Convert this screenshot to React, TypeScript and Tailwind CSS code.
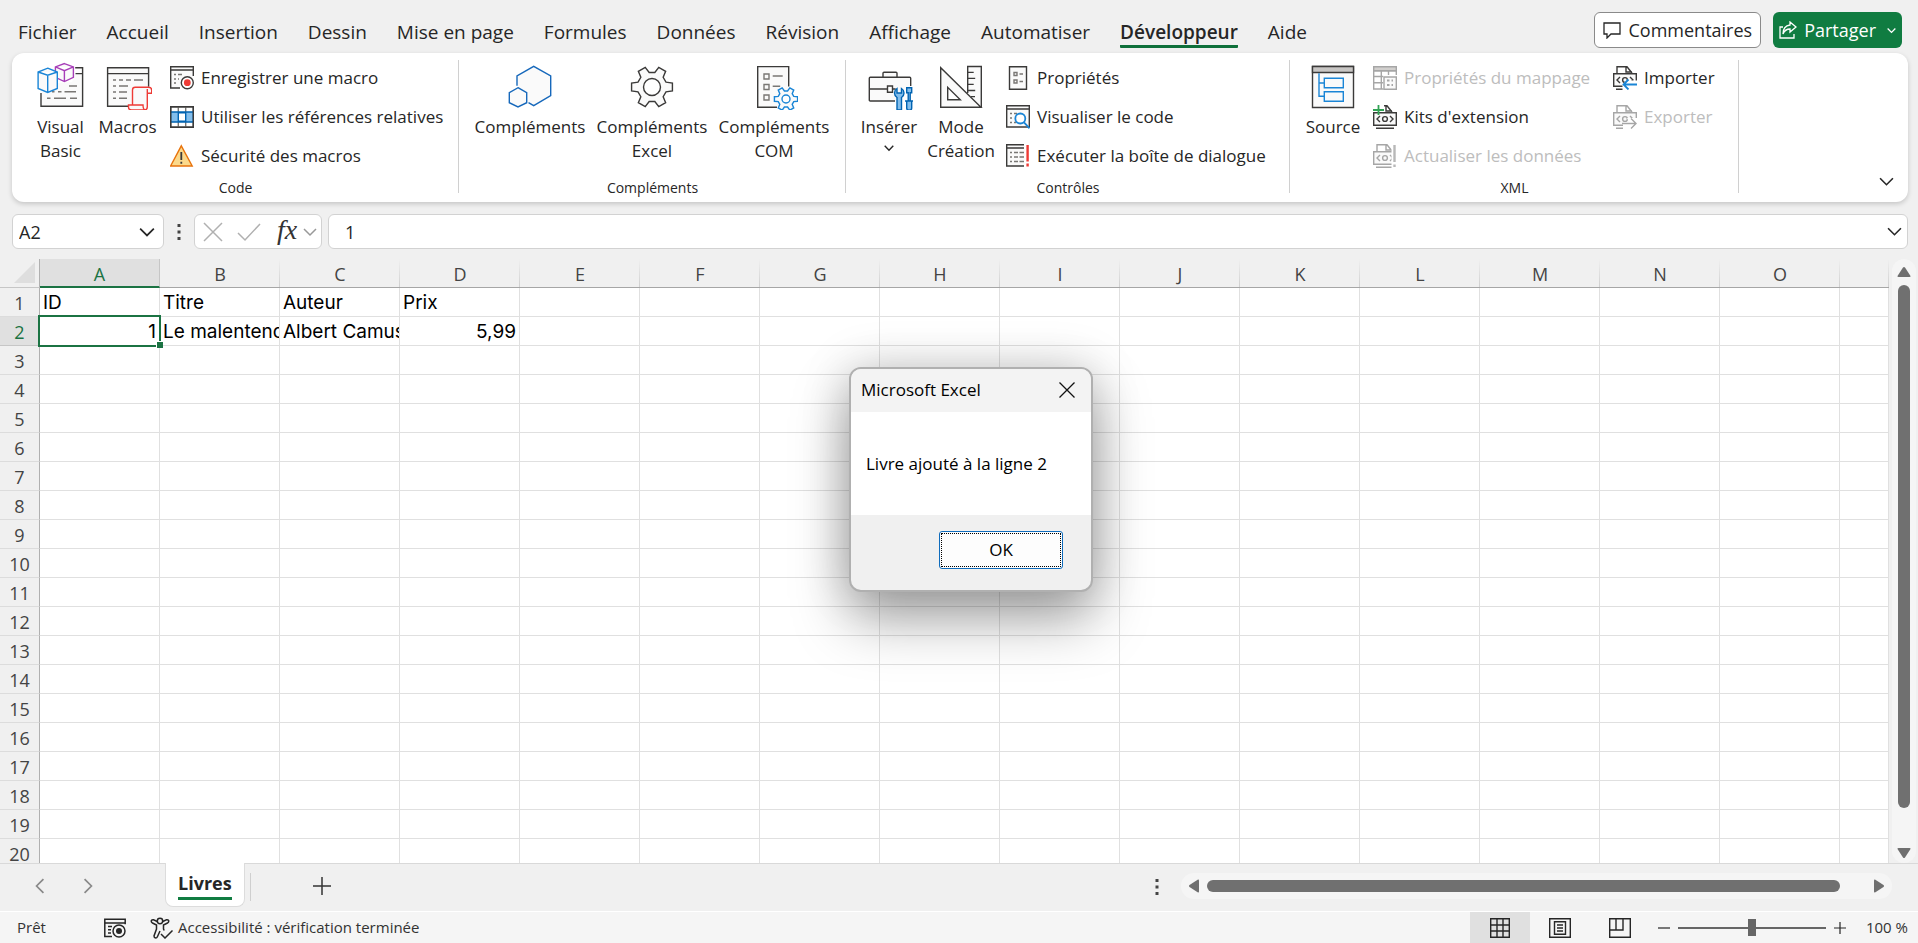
/**
 * Spreadsheet window — ribbon (Développeur tab), formula bar, grid,
 * sheet tabs, status bar and the message box shown after adding a book.
 */

import type { ReactNode } from 'react'

const TABS = [
  'Fichier', 'Accueil', 'Insertion', 'Dessin', 'Mise en page', 'Formules', 'Données',
  'Révision', 'Affichage', 'Automatiser', 'Développeur', 'Aide',
]
const ACTIVE_TAB = 'Développeur'

const COLUMNS = ['A', 'B', 'C', 'D', 'E', 'F', 'G', 'H', 'I', 'J', 'K', 'L', 'M', 'N', 'O', '']
const ROW_COUNT = 20

const CELLS: Record<string, { text: string; num?: boolean }> = {
  A1: { text: 'ID' },
  B1: { text: 'Titre' },
  C1: { text: 'Auteur' },
  D1: { text: 'Prix' },
  A2: { text: '1', num: true },
  B2: { text: 'Le malentendu' },
  C2: { text: 'Albert Camus' },
  D2: { text: '5,99', num: true },
}

const INK = '#3b3a39'
const SOFT = '#797774'
const PAPER = '#fafafa'
const BLUE = '#1a85d6'
const RED = '#ee3b36'

/* ---------- icons ---------- */

function Big({ children }: { children: ReactNode }) {
  return (
    <svg viewBox="0 0 48 48" className="size-12 shrink-0" fill="none" stroke={INK} strokeWidth="1.4" aria-hidden="true">
      {children}
    </svg>
  )
}

function Small({ children, dim }: { children: ReactNode; dim?: boolean }) {
  return (
    <svg viewBox="0 0 24 24" className="size-6 shrink-0" fill="none" stroke={dim ? '#a6a6a6' : INK} strokeWidth="1.4" aria-hidden="true">
      {children}
    </svg>
  )
}

function gearPath(cx: number, cy: number, outer: number, root: number) {
  const pt = (r: number, deg: number) => {
    const a = (deg * Math.PI) / 180
    return `${(cx + r * Math.cos(a)).toFixed(2)} ${(cy + r * Math.sin(a)).toFixed(2)}`
  }
  const parts: string[] = []
  for (let k = 0; k < 6; k++) {
    const a = k * 60
    parts.push(pt(root, a - 19), pt(outer, a - 11), pt(outer, a + 11), pt(root, a + 19))
  }
  return `M${parts.join('L')}Z`
}

function VisualBasicIcon() {
  return (
    <Big>
      <path d="M5 30h6l10-6 0-3 14-1 3-8h7v31.5H5z" fill={PAPER} stroke="none" />
      <path d="M4 31v13.3h41.6V5.7h-7.4M38.5 11.6h7" />
      <path d="M32 24h8M21 29.8h3.5M27.5 29.8H39M15 29.8h2.5M10 36.2h3.5M17 36.2h12M33 36.2h7" stroke={SOFT} />
      <path d="m27.4 1.6 9 3.3v10.5l-9 4.2-9-4.2V4.9zM18.4 4.9l9 3.8 9-3.8M27.4 8.7v10.9" fill={PAPER} stroke="#a73eb8" />
      <path d="M10.7 6.2 20.3 10v16.5l-9.6 4-9.6-4V10zM1.1 10l9.6 3.2 9.6-3.2M10.7 13.2v17.3" fill={PAPER} stroke={BLUE} />
    </Big>
  )
}

function MacrosIcon() {
  return (
    <Big>
      <path d="M24 44.3H3.6V5.7h41v19M3.6 11.6h41" fill={PAPER} />
      <path d="M9 18h3M15 18h4M22 18h5M30 18h9M9 24h3M15 24h9M9 30h3M15 30h8M9 36.2h3M15 36.2h8" stroke={SOFT} />
      <path d="M28.5 43V28q0-2.7 2.7-2.7h13.5q3 0 3 3v3h-4.4V45q0 3-3 3H27.5q-3 0-3-2.700V43H39q0 5 2.500 5M43.300 31V27" fill={PAPER} stroke={RED} />
    </Big>
  )
}

function AddinsIcon() {
  return (
    <Big>
      <path d="M11 23.700V14L27.700 4.300 44.700 14v19.700L27.700 43.700l-5.200-3" fill={PAPER} stroke="#1668bb" />
      <path d="m12 25.700 8.700 5v10l-8.700 4.300-8.700-4.300v-10z" fill={PAPER} stroke="#1668bb" />
    </Big>
  )
}

function ExcelAddinsIcon() {
  return (
    <Big>
      <path d={gearPath(24, 25, 20.8, 14.8)} fill={PAPER} />
      <circle cx="24" cy="25" r="8.500" fill="#fff" />
    </Big>
  )
}

function ComAddinsIcon() {
  return (
    <Big>
      <path d="M27 45.300H7.700V4.600h31v20" fill={PAPER} />
      <path d="M14 12h5v5h-5zM14 22.500h5v5h-5zM14 33h5v5h-5zM22.700 14h10M22.700 24.300h7.500" stroke={SOFT} />
      <path d={gearPath(36, 37, 11.8, 8.2)} fill={PAPER} stroke={BLUE} />
      <circle cx="36" cy="37" r="4" fill="#fff" stroke={BLUE} />
    </Big>
  )
}

function ToolboxIcon() {
  return (
    <Big>
      <path d="M30 39H5.300q-1 0-1-1V16.300q0-1 1-1h39.400q1 0 1 1V24M18 15.300v-4q0-1 1-1h12q1 0 1 1v4M4.300 27h18M27.700 27h3" fill={PAPER} />
      <path d="M22.500 24h5v6.300h-5z" fill="#fff" />
      <path d="M32 26.500q-2.500 1.500-2.500 4.500 0 3 2.500 4.500V48h4.500V35.500q2.500-1.500 2.500-4.500 0-3-2.500-4.500V31h-4.500z" fill="#83beec" stroke="#0063b1" />
      <path d="M41.700 25.800h5v5h-1.500V39h1.500v7q0 2.200-2.500 2.200T41.700 46v-7h1.500v-8.200h-1.500zM40 39h8.500" fill="#83beec" stroke="#0063b1" />
    </Big>
  )
}

function DesignModeIcon() {
  return (
    <Big>
      <path d="M30.700 31V4.500h13.600V45" fill={PAPER} />
      <path d="M30.700 10.400h6M30.700 16.400h7.500M30.700 22.400h6M30.700 28.500h7.500M34 34.600h4" />
      <path d="M3.700 5.700v39.600H44z" fill={PAPER} />
      <path d="M10.700 25.300v12.400h12.600z" fill="#fff" />
    </Big>
  )
}

function SourceIcon() {
  return (
    <Big>
      <path d="M3.500 4.500h41v41h-41z" fill={PAPER} />
      <path d="M3.500 4.500h41v6h-41z" fill="#c8c6c4" />
      <path d="M10 11.300v23h5.300M10 21h5.300M15.300 16.300h19v9.400h-19zM15.300 29.700h19v9.600h-19z" stroke={BLUE} />
    </Big>
  )
}

function RecordIcon() {
  return (
    <Small>
      <path d="M10 22H.7V.7h22.600V10M.7 4h22.600" fill={PAPER} />
      <path d="M4 8.500h2M8 8.500h4M4 13h2M4 17h2M8 13h1" stroke={SOFT} />
      <circle cx="17.300" cy="16.700" r="6" fill="#fff" />
      <circle cx="17.300" cy="16.700" r="3.400" fill={RED} stroke="none" />
    </Small>
  )
}

function RelativeRefsIcon() {
  return (
    <Small>
      <path d="M.7 1.700h22.600v20.600H.7z" fill="#fff" />
      <path d="M8.300 1.700v20.600M15.700 1.700v20.600" stroke={SOFT} />
      <path d="M.7 7h22.600v10H.7z" fill="#83beec" stroke="#0063b1" />
      <path d="M8.300 7.700h7.400v8.600H8.300z" fill="#fff" stroke="#0063b1" />
      <path d="M.7 1.700h22.600v20.600H.7z" />
    </Small>
  )
}

function WarningIcon() {
  return (
    <Small>
      <path d="M11.300 1.800 22.200 22H.6z" fill="#fbd98b" stroke="#e8730c" />
      <path d="M11.300 8v8M11.300 17.800v2" strokeWidth="1.800" />
    </Small>
  )
}

function PropertiesIcon() {
  return (
    <Small>
      <path d="M3.500.7h17v22.600h-17z" fill={PAPER} />
      <path d="M8 6.500h3v3H8zM8 14h3v3H8zM13.500 8H17M13.500 15.500H17" stroke={SOFT} />
    </Small>
  )
}

function ViewCodeIcon() {
  return (
    <Small>
      <path d="M.7.700h22.600V22H.7zM.7 4h22.600" fill={PAPER} />
      <path d="M4 8.500h2M8 8.500h3M4 13h2M4 17.500h2M8 17.500h2" stroke={SOFT} />
      <circle cx="14.300" cy="13.500" r="5" fill="#fff" stroke={BLUE} strokeWidth="1.800" />
      <path d="m18 17.300 5.500 6" stroke={BLUE} strokeWidth="1.800" />
    </Small>
  )
}

function RunDialogIcon() {
  return (
    <Small>
      <path d="M18 22H.7V.7H18M.7 4H18" fill={PAPER} />
      <path d="M4 8.500h2M8 8.500h4M13.500 8.500H18M4 13h2M8 13h4M13.500 13H18M4 17.500h2M8 17.500h4M13.500 17.500H18" stroke={SOFT} />
      <path d="M21.600 1v16.500M21.600 19.500v3" stroke={RED} strokeWidth="2.400" />
    </Small>
  )
}

function MapPropertiesIcon() {
  return (
    <Small dim>
      <path d="M.7.700h22.600v4H.7z" fill="#d2d0ce" />
      <path d="M10.500 23H.7V4.700h22.600V9M8.300 4.700V23M15.500 4.700V9M.7 10.500h9.500M.7 16.700h9.500" />
      <path d="M11 11h12.300v12.300H11z" fill={PAPER} />
      <path d="M14 14.500h2.500M14 19h2.500M18.500 14.500H20M18.500 19H20" strokeWidth="2" />
    </Small>
  )
}

/* document carrying a <o> tag, shared by the XML commands */
function XmlDoc({ dim, children }: { dim?: boolean; children?: ReactNode }) {
  return (
    <Small dim={dim}>
      <path d="M4 8V.7h10l5 6.300M13 .7V6h6" />
      <path d="M.7 7.700h22.600v12.600H.7z" fill={PAPER} />
      <path d="M3 23.300h18M7 11l-3 3 3 3M17 11l3 3-3 3" />
      <circle cx="12" cy="14" r="2.400" />
      {children}
    </Small>
  )
}

function KitsIcon() {
  return (
    <XmlDoc>
      <path d="M0 0h11v7H0z" fill="#fff" stroke="none" />
      <path d="M5.500 0v10M0 5h11" stroke="#31a354" strokeWidth="1.800" />
    </XmlDoc>
  )
}

function RefreshDataIcon() {
  return (
    <XmlDoc dim>
      <path d="M18.500 0H24v24h-5.500z" fill="#fff" stroke="none" />
      <path d="M21.500 1v17M21.500 20.500V23" stroke="#b8b8b8" strokeWidth="2.400" />
    </XmlDoc>
  )
}

function ImportIcon() {
  return (
    <XmlDoc>
      <path d="M13 14.500h11V24H9.500v-5z" fill="#fff" stroke="none" />
      <path d="M24 18.500H10.500M15.500 13.500l-5 5 5 5" stroke={BLUE} strokeWidth="1.800" />
    </XmlDoc>
  )
}

function ExportIcon() {
  return (
    <XmlDoc dim>
      <path d="M14 13h10v11H10v-7h6z" fill="#fff" stroke="none" />
      <path d="M9 18.500h14M18 13.500l5 5-5 5" />
    </XmlDoc>
  )
}

function Chevron({ className }: { className: string }) {
  return (
    <svg viewBox="0 0 14 14" className={className} fill="none" stroke="currentColor" strokeWidth="1.500" aria-hidden="true">
      <path d="m1 4 6 6 6-6" />
    </svg>
  )
}

function Kebab() {
  return (
    <svg viewBox="0 0 4 18" className="h-[18px] w-1" fill="#444" aria-hidden="true">
      <path d="M.5 1h3v3h-3zM.5 7.500h3v3h-3zM.5 14h3v3h-3z" />
    </svg>
  )
}

/* ---------- ribbon ---------- */

function BigButton({ icon, lines, width, menu }: { icon: ReactNode; lines: string[]; width: string; menu?: boolean }) {
  return (
    <button type="button" className={`flex flex-col items-center gap-[5px] pt-1 text-[17px] leading-6 ${width}`}>
      {icon}
      <span className="flex flex-col items-center">
        {lines.map((l) => (
          <span key={l} className="whitespace-nowrap">{l}</span>
        ))}
        {menu && <Chevron className="mt-1 size-[10px] stroke-2" />}
      </span>
    </button>
  )
}

function SmallButton({ icon, label, disabled }: { icon: ReactNode; label: string; disabled?: boolean }) {
  return (
    <button type="button" disabled={disabled} className="flex h-[39px] items-center gap-[7px] text-[17px] whitespace-nowrap disabled:text-[#bdbdbd]">
      {icon}
      {label}
    </button>
  )
}

function Group({ label, width, pad, children }: { label: string; width: string; pad: string; children: ReactNode }) {
  return (
    <section aria-label={label} className={`relative flex shrink-0 flex-col justify-between pt-[5px] pb-1 ${width}`}>
      <div className={`flex ${pad}`}>{children}</div>
      <div className="text-center text-sm leading-5">{label}</div>
      <span className="absolute top-[7px] right-0 bottom-[9px] w-px bg-[#d0d0d0]" />
    </section>
  )
}

function Ribbon() {
  return (
    <div className="relative mr-[10px] ml-3 flex h-[149px] shrink-0 rounded-xl bg-white shadow-[0_2px_5px_rgba(0,0,0,0.18)]">
      <Group label="Code" width="w-[447px]" pad="pl-[15px]">
        <BigButton width="w-[67px]" icon={<VisualBasicIcon />} lines={['Visual', 'Basic']} />
        <BigButton width="w-[67px]" icon={<MacrosIcon />} lines={['Macros']} />
        <div className="ml-[9px] flex flex-col">
          <SmallButton icon={<RecordIcon />} label="Enregistrer une macro" />
          <SmallButton icon={<RelativeRefsIcon />} label="Utiliser les références relatives" />
          <SmallButton icon={<WarningIcon />} label="Sécurité des macros" />
        </div>
      </Group>
      <Group label="Compléments" width="w-[387px]" pad="pl-[10px]">
        <BigButton width="w-[122px]" icon={<AddinsIcon />} lines={['Compléments']} />
        <BigButton width="w-[122px]" icon={<ExcelAddinsIcon />} lines={['Compléments', 'Excel']} />
        <BigButton width="w-[122px]" icon={<ComAddinsIcon />} lines={['Compléments', 'COM']} />
      </Group>
      <Group label="Contrôles" width="w-[444px]" pad="pl-[7px]">
        <BigButton width="w-[72px]" icon={<ToolboxIcon />} lines={['Insérer']} menu />
        <BigButton width="w-[72px]" icon={<DesignModeIcon />} lines={['Mode', 'Création']} />
        <div className="ml-[9px] flex flex-col">
          <SmallButton icon={<PropertiesIcon />} label="Propriétés" />
          <SmallButton icon={<ViewCodeIcon />} label="Visualiser le code" />
          <SmallButton icon={<RunDialogIcon />} label="Exécuter la boîte de dialogue" />
        </div>
      </Group>
      <Group label="XML" width="w-[449px]" pad="pl-[7px]">
        <BigButton width="w-[72px]" icon={<SourceIcon />} lines={['Source']} />
        <div className="ml-1 flex w-[240px] flex-col">
          <SmallButton icon={<MapPropertiesIcon />} label="Propriétés du mappage" disabled />
          <SmallButton icon={<KitsIcon />} label="Kits d'extension" />
          <SmallButton icon={<RefreshDataIcon />} label="Actualiser les données" disabled />
        </div>
        <div className="flex flex-col">
          <SmallButton icon={<ImportIcon />} label="Importer" />
          <SmallButton icon={<ExportIcon />} label="Exporter" disabled />
        </div>
      </Group>
      <button type="button" aria-label="Réduire le ruban" className="mr-[14px] mb-[13px] ml-auto self-end">
        <Chevron className="size-[15px]" />
      </button>
    </div>
  )
}

function TabBar() {
  return (
    <header className="flex h-[53px] shrink-0 items-start pr-4 pl-[18px]">
      <nav className="flex gap-[30px] pt-[18px] text-[19px] leading-7">
        {TABS.map((t) => (
          <a
            key={t}
            href="#"
            className={
              t === ACTIVE_TAB
                ? 'h-[30px] rounded-[1px] border-b-3 border-[#0f703b] font-semibold whitespace-nowrap'
                : 'whitespace-nowrap'
            }
          >
            {t}
          </a>
        ))}
      </nav>
      <div className="ml-auto flex gap-3 pt-3 text-lg">
        <button type="button" className="flex h-9 items-center gap-2 rounded-md border border-[#8a8a8a] bg-white px-2">
          <svg viewBox="0 0 18 18" className="size-[18px]" fill="none" stroke="currentColor" strokeWidth="1.300" aria-hidden="true">
            <path d="M1 2h16v11H8l-4 4v-4H1z" />
          </svg>
          Commentaires
        </button>
        <button type="button" className="flex h-9 items-center gap-[7px] rounded-md bg-[#107c41] px-[6px] text-white">
          <svg viewBox="0 0 18 18" className="size-[18px]" fill="none" stroke="currentColor" strokeWidth="1.300" aria-hidden="true">
            <path d="M4 6H1v11h14v-4M11 1l6 5-6 5V8Q6 8 4 13q0-8 7-9z" />
          </svg>
          Partager
          <Chevron className="ml-1 size-[9px] stroke-2" />
        </button>
      </div>
    </header>
  )
}

/* ---------- formula bar ---------- */

function FormulaBar() {
  return (
    <div className="mt-3 mb-[10px] flex h-[35px] shrink-0 items-stretch pr-[10px] pl-3 text-lg">
      <label className="flex w-[152px] items-center rounded-md border border-[#d2d2d2] bg-white pr-2 pl-[6px]">
        <input aria-label="Zone Nom" defaultValue="A2" className="w-full min-w-0 bg-transparent outline-none" />
        <Chevron className="size-4 shrink-0" />
      </label>
      <button type="button" aria-label="Options" className="flex w-[30px] items-center justify-center">
        <Kebab />
      </button>
      <div className="flex w-[128px] items-center rounded-md border border-[#d2d2d2] bg-white pl-2 text-[#b0b0b0]">
        <button type="button" aria-label="Annuler">
          <svg viewBox="0 0 20 20" className="size-5" fill="none" stroke="currentColor" strokeWidth="1.500">
            <path d="m1 1 18 18M19 1 1 19" />
          </svg>
        </button>
        <button type="button" aria-label="Entrer" className="ml-[14px]">
          <svg viewBox="0 0 24 20" className="h-5 w-6" fill="none" stroke="currentColor" strokeWidth="1.500">
            <path d="m1 11 7 7L23 2" />
          </svg>
        </button>
        <button type="button" aria-label="Insérer une fonction" className="ml-4 pb-1 font-['Liberation_Serif',serif] text-[28px] leading-7 text-[#333] italic">
          fx
        </button>
        <Chevron className="ml-[6px] size-[14px] text-[#999]" />
      </div>
      <label className="ml-[6px] flex flex-1 items-center rounded-md border border-[#d2d2d2] bg-white pr-[5px] pl-4">
        <input aria-label="Barre de formule" defaultValue="1" className="w-full min-w-0 bg-transparent outline-none" />
        <Chevron className="size-[15px] shrink-0" />
      </label>
    </div>
  )
}

/* ---------- grid ---------- */

function Sheet() {
  return (
    <div className="flex min-h-0 flex-1">
      <div className="min-w-0 flex-1 overflow-hidden">
        <table className="w-full table-fixed border-separate border-spacing-0 bg-white">
          <colgroup>
            <col className="w-10" />
            {COLUMNS.map((c) => (
              <col key={c} className={c ? 'w-[120px]' : ''} />
            ))}
          </colgroup>
          <thead>
            <tr className="h-[29px] bg-[#f0f0f0] text-lg leading-6 text-[#444]">
              <th aria-label="Tout sélectionner" className="border-r border-b border-[#c6c6c6] border-r-[#b0b0b0] p-0">
                <svg viewBox="0 0 22 22" className="mr-[3px] ml-auto size-[22px]" fill="#dedede">
                  <path d="M21 0v21H0z" />
                </svg>
              </th>
              {COLUMNS.map((c) => (
                <th
                  key={c}
                  className={
                    c === 'A'
                      ? 'border-r border-b-2 border-[#c6c6c6] border-b-[#1b7343] bg-[#e0e0e0] p-0 pt-[2px] font-normal text-[#1b7343]'
                      : 'border-b border-[#a6a6a6] bg-[linear-gradient(to_bottom,transparent,#cfcfcf)] bg-[length:1px_100%] bg-right bg-no-repeat p-0 pt-[2px] font-normal'
                  }
                >
                  {c}
                </th>
              ))}
            </tr>
          </thead>
          <tbody>
            {Array.from({ length: ROW_COUNT }, (_, i) => i + 1).map((r) => (
              <tr key={r} className="h-[29px]">
                <th
                  className={
                    r === 2
                      ? 'border-r border-b border-[#c6c6c6] border-r-[#b0b0b0] bg-[#e0e0e0] p-0 pt-[2px] text-lg leading-6 font-normal text-[#1b7343]'
                      : 'border-r border-b border-[#dcdcdc] border-r-[#b0b0b0] bg-[#f0f0f0] p-0 pt-[2px] text-lg leading-6 font-normal text-[#444]'
                  }
                >
                  {r}
                </th>
                {COLUMNS.map((c) => {
                  const cell = CELLS[c + r]
                  const selected = c === 'A' && r === 2
                  return (
                    <td key={c} className="relative border-r border-b border-[#e0e0e0] p-0 pt-[2px] font-['Inter',sans-serif] text-[19px] leading-6 text-black">
                      {cell && (
                        <div className={cell.num ? 'overflow-hidden pr-[3px] text-right whitespace-nowrap' : 'overflow-hidden pl-[3px] whitespace-nowrap'}>
                          {cell.text}
                        </div>
                      )}
                      {selected && (
                        <span className="absolute -inset-[2px] border-2 border-[#1b7343]">
                          <span className="absolute -right-1 -bottom-[3px] z-10 size-[7px] border-t border-l border-white bg-[#1b7343]" />
                        </span>
                      )}
                    </td>
                  )
                })}
              </tr>
            ))}
          </tbody>
        </table>
      </div>
      {/* Vertical scrollbar */}
      <div className="mr-[2px] ml-[3px] flex w-6 flex-col items-center rounded-full bg-[#f5f5f5] pt-2 pb-[5px]">
        <svg viewBox="0 0 14 10" className="h-[10px] w-[14px] shrink-0" fill="#6f6f6f" aria-hidden="true">
          <path d="M6 .5q1-1 2 0L13.500 9q.3 1-1 1h-11q-1.300 0-1-1z" />
        </svg>
        <div className="mt-2 mb-10 w-3 flex-1 rounded-full bg-[#707070]" />
        <svg viewBox="0 0 14 10" className="h-[10px] w-[14px] shrink-0" fill="#6f6f6f" aria-hidden="true">
          <path d="M6 9.500q1 1 2 0L13.500 1q.3-1-1-1h-11Q.2 0 .5 1z" />
        </svg>
      </div>
    </div>
  )
}

function SheetTabs() {
  return (
    <div className="flex h-12 shrink-0 items-start border-t border-[#d9d9d9] pr-[26px] pl-8">
      <div className="flex h-11 w-[133px] items-center gap-8 text-[#8a8a8a]">
        <button type="button" aria-label="Feuille précédente"><Chevron className="size-4 rotate-90" /></button>
        <button type="button" aria-label="Feuille suivante"><Chevron className="size-4 -rotate-90" /></button>
      </div>
      <button type="button" className="-mt-px flex h-11 flex-col items-center rounded-b-lg border border-t-0 border-[#dcdcdc] bg-white px-3 pt-[6px] text-lg leading-7 font-bold">
        <span className="border-b-3 border-[#107c41]">Livres</span>
      </button>
      <span className="mt-[9px] ml-[5px] h-7 w-px bg-[#cfcfcf]" />
      <button type="button" aria-label="Nouvelle feuille" className="mt-[13px] ml-[62px]">
        <svg viewBox="0 0 18 18" className="size-[18px]" stroke="#333" strokeWidth="1.500"><path d="M9 0v18M0 9h18" /></svg>
      </button>
      <button type="button" aria-label="Redimensionner" className="mt-[14px] ml-auto"><Kebab /></button>
      <div className="mt-[9px] ml-[22px] flex h-[26px] w-[711px] items-center rounded-full bg-[#f5f5f5] px-2">
        <svg viewBox="0 0 10 14" className="h-[14px] w-[10px]" fill="#6f6f6f" aria-hidden="true">
          <path d="M.5 6q-1 1 0 2L9 13.500q1 .3 1-1v-11Q10 .2 9 .5z" />
        </svg>
        <div className="mr-[34px] ml-2 h-3 flex-1 rounded-full bg-[#707070]" />
        <svg viewBox="0 0 10 14" className="h-[14px] w-[10px]" fill="#6f6f6f" aria-hidden="true">
          <path d="M9.500 6q1 1 0 2L1 13.500q-1 .3-1-1v-11Q0 .2 1 .5z" />
        </svg>
      </div>
    </div>
  )
}

function StatusBar() {
  return (
    <footer className="flex h-8 shrink-0 items-center border-t border-white bg-[#f5f5f5] pl-[17px] text-[15px] text-[#333]">
      <span className="w-[87px]">Prêt</span>
      <button type="button" aria-label="Enregistrer une macro">
        <svg viewBox="0 0 22 20" className="h-5 w-[22px]" fill="none" stroke="#262626" strokeWidth="1.500">
          <path d="M8 18.500H.8V1.200h20.400v5M.8 5h20M4 8.500h4M4 11.700h3M4 15h3" />
          <circle cx="15" cy="13" r="6" />
          <circle cx="15" cy="13" r="3" fill="#262626" stroke="none" />
        </svg>
      </button>
      <button type="button" className="ml-6 flex items-center gap-1">
        <svg viewBox="0 0 24 22" className="h-[22px] w-6" fill="none" stroke="#262626" strokeWidth="1.500" aria-hidden="true">
          <circle cx="10" cy="4" r="2.700" />
          <path d="M7.300 4.500 3.500 2.800Q1.500 2.500 1.200 4q0 1.300 1.300 2l4 2v4L4 19q0 1.800 1.800 2 1 0 1.600-1.300L10 14M12.700 4.500l3.800-1.700q2-.3 2.300 1.200 0 1.300-1.300 2l-4 2v4l.7 1.500" />
          <path d="m11 17 4 4 7.500-7.500" />
        </svg>
        Accessibilité : vérification terminée
      </button>
      <div className="ml-auto flex h-full">
        <button type="button" aria-label="Normal" className="flex w-[60px] items-center justify-center bg-[#e0e0e0]">
          <svg viewBox="0 0 20 20" className="size-5" fill="none" stroke="#262626" strokeWidth="1.400">
            <path d="M.7.700h18.600v18.600H.7zM.7 7h18.600M.7 13h18.600M7 .7v18.600M13 .7v18.600" />
          </svg>
        </button>
        <button type="button" aria-label="Mise en page" className="flex w-[60px] items-center justify-center">
          <svg viewBox="0 0 22 20" className="h-5 w-[22px]" fill="none" stroke="#262626" strokeWidth="1.400">
            <path d="M.7.700h20.600v18.600H.7zM5.500 3.700h11v12.600h-11zM8 7h6M8 10h6M8 13h6" />
          </svg>
        </button>
        <button type="button" aria-label="Aperçu des sauts de page" className="flex w-[60px] items-center justify-center">
          <svg viewBox="0 0 22 20" className="h-5 w-[22px]" fill="none" stroke="#262626" strokeWidth="1.400">
            <path d="M.7.700h20.600v18.600H.7zM.7 12H14V.7M7 .7V12" />
          </svg>
        </button>
      </div>
      <button type="button" aria-label="Zoom arrière" className="ml-2">
        <svg viewBox="0 0 12 12" className="size-3" stroke="#262626" strokeWidth="1.200"><path d="M0 6h12" /></svg>
      </button>
      <input
        type="range"
        aria-label="Zoom"
        min={0}
        max={100}
        defaultValue={50}
        className="mx-2 h-[18px] w-[148px] appearance-none bg-[linear-gradient(#666,#666)] bg-[length:100%_2px] bg-center bg-no-repeat [&::-webkit-slider-thumb]:h-[17px] [&::-webkit-slider-thumb]:w-2 [&::-webkit-slider-thumb]:appearance-none [&::-webkit-slider-thumb]:bg-[#666]"
      />
      <button type="button" aria-label="Zoom avant">
        <svg viewBox="0 0 12 12" className="size-3" stroke="#262626" strokeWidth="1.200"><path d="M0 6h12M6 0v12" /></svg>
      </button>
      <span className="mr-[10px] ml-5 whitespace-nowrap">100 %</span>
    </footer>
  )
}

/* ---------- message box ---------- */

function MessageBox() {
  return (
    <div
      role="dialog"
      aria-label="Microsoft Excel"
      className="absolute top-[367px] left-[849px] w-[244px] overflow-hidden rounded-xl border-2 border-[#b0b0b0] bg-[#f0f0f0] text-[17px] text-black shadow-[0_28px_56px_rgba(0,0,0,0.34),0_0_48px_rgba(0,0,0,0.18)]"
    >
      <div className="flex h-[43px] items-center justify-between bg-[#f3f3f3] pr-4 pb-[2px] pl-[10px]">
        Microsoft Excel
        <button type="button" aria-label="Fermer">
          <svg viewBox="0 0 16 16" className="size-4" stroke="#111" strokeWidth="1.300"><path d="m.5.500 15 15M15.500.500l-15 15" /></svg>
        </button>
      </div>
      <p className="flex h-[103px] items-center bg-white px-[15px]">Livre ajouté à la ligne 2</p>
      <div className="flex h-[75px] items-start justify-end pt-4 pr-7">
        <button type="button" className="h-[38px] w-[124px] rounded-[3px] border border-[#0f6cbd] bg-[#fdfdfd] p-px">
          <span className="flex size-full items-center justify-center border border-dotted border-black">OK</span>
        </button>
      </div>
    </div>
  )
}

export default function App() {
  return (
    <div className="relative flex h-screen flex-col overflow-hidden bg-[#f0f0f0] font-['Open_Sans','Noto_Sans',sans-serif] text-[#262626]">
      <TabBar />
      <Ribbon />
      <FormulaBar />
      <Sheet />
      <SheetTabs />
      <StatusBar />
      <MessageBox />
    </div>
  )
}
